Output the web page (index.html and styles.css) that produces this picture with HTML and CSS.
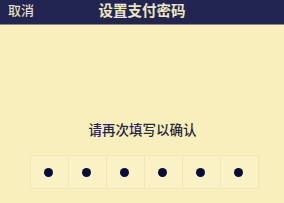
FILE: index.html
```html
<!DOCTYPE html>
<html>
<head>
<meta charset="utf-8">
<link rel="stylesheet" href="styles.css">
</head>
<body>
<div class="header">
  <span class="cancel">取消</span>
  <span class="title">设置支付密码</span>
</div>
<div class="content">
  <div class="prompt">请再次填写以确认</div>
  <div class="pwd">
    <div class="cell"><span class="dot"></span></div>
    <div class="cell"><span class="dot"></span></div>
    <div class="cell"><span class="dot"></span></div>
    <div class="cell"><span class="dot"></span></div>
    <div class="cell"><span class="dot"></span></div>
    <div class="cell"><span class="dot"></span></div>
  </div>
</div>
</body>
</html>
```
FILE: styles.css
```css
html, body {
  margin: 0;
  padding: 0;
  width: 284px;
  height: 203px;
  overflow: hidden;
  background: #f9efbd;
  font-family: "Noto Sans CJK SC", "Liberation Sans", sans-serif;
}
.header {
  position: relative;
  height: 24px;
  background: #222551;
  border-bottom: 1px solid #8d8a78;
  display: flex;
  align-items: center;
  justify-content: center;
}
.cancel {
  position: absolute;
  left: 8px;
  top: 1px;
  font-size: 13px;
  line-height: 17px;
  font-weight: 500;
  color: #e4dfc2;
}
.title {
  font-size: 14.5px;
  line-height: 18px;
  margin-top: -5px;
  font-weight: 600;
  color: #ede6c2;
}
.content {
  display: flex;
  flex-direction: column;
  align-items: center;
}
.prompt {
  margin-top: 95px;
  margin-left: 1px;
  font-size: 13.5px;
  line-height: 18px;
  font-weight: 500;
  color: #262740;
}
.pwd {
  margin-top: 17px;
  margin-left: 5px;
  display: flex;
  width: 229px;
  height: 34px;
  border: 1px solid #efe5b6;
  background: #faf2c4;
  box-sizing: border-box;
}
.cell {
  flex: 1;
  display: flex;
  align-items: center;
  justify-content: center;
  border-left: 1px solid #efe5b6;
}
.cell:first-child { border-left: none; }
.dot {
  width: 9px;
  height: 9px;
  border-radius: 50%;
  background: #080c3a;
  margin-left: -3px;
}
```
